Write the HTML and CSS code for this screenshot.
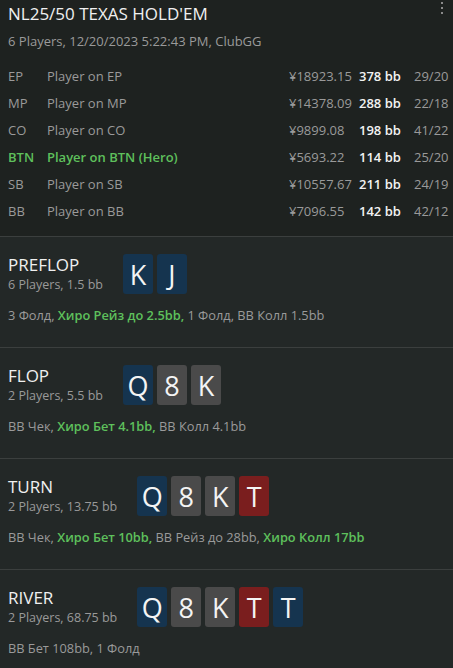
FILE: index.html
```html
<!DOCTYPE html>
<html lang="en">
<head>
  <meta charset="UTF-8">
  <meta name="viewport" content="width=device-width, initial-scale=1.0">
  <title>Hand</title>
  <link rel="stylesheet" href="styles.css">
</head>
<body>
  <div class="hand">
    <div class="hand-header">
      <button class="menu-btn" aria-label="Menu"><span></span><span></span><span></span></button>
      <h1 class="hand-title">NL25/50 TEXAS HOLD'EM</h1>
      <div class="hand-sub">6 Players, 12/20/2023 5:22:43 PM, ClubGG</div>
      <div class="players">
        <div class="player">
          <span class="pos">EP</span><span class="name">Player on EP</span><span class="money">¥18923.15</span><span class="bb">378 bb</span><span class="stats">29/20</span>
        </div>
        <div class="player">
          <span class="pos">MP</span><span class="name">Player on MP</span><span class="money">¥14378.09</span><span class="bb">288 bb</span><span class="stats">22/18</span>
        </div>
        <div class="player">
          <span class="pos">CO</span><span class="name">Player on CO</span><span class="money">¥9899.08</span><span class="bb">198 bb</span><span class="stats">41/22</span>
        </div>
        <div class="player hero">
          <span class="pos">BTN</span><span class="name">Player on BTN (Hero)</span><span class="money">¥5693.22</span><span class="bb">114 bb</span><span class="stats">25/20</span>
        </div>
        <div class="player">
          <span class="pos">SB</span><span class="name">Player on SB</span><span class="money">¥10557.67</span><span class="bb">211 bb</span><span class="stats">24/19</span>
        </div>
        <div class="player">
          <span class="pos">BB</span><span class="name">Player on BB</span><span class="money">¥7096.55</span><span class="bb">142 bb</span><span class="stats">42/12</span>
        </div>
      </div>
    </div>

    <div class="street">
      <div class="street-head">
        <div class="street-info">
          <div class="street-name">PREFLOP</div>
          <div class="street-sub">6 Players, 1.5 bb</div>
        </div>
        <div class="cards">
          <div class="card blue">K</div>
          <div class="card blue">J</div>
        </div>
      </div>
      <div class="actions">3 Фолд, <b>Хиро Рейз до 2.5bb,</b> 1 Фолд, BB Колл 1.5bb</div>
    </div>

    <div class="street">
      <div class="street-head">
        <div class="street-info">
          <div class="street-name">FLOP</div>
          <div class="street-sub">2 Players, 5.5 bb</div>
        </div>
        <div class="cards">
          <div class="card blue">Q</div>
          <div class="card grey">8</div>
          <div class="card grey">K</div>
        </div>
      </div>
      <div class="actions">BB Чек, <b>Хиро Бет 4.1bb,</b> BB Колл 4.1bb</div>
    </div>

    <div class="street">
      <div class="street-head">
        <div class="street-info">
          <div class="street-name">TURN</div>
          <div class="street-sub">2 Players, 13.75 bb</div>
        </div>
        <div class="cards">
          <div class="card blue">Q</div>
          <div class="card grey">8</div>
          <div class="card grey">K</div>
          <div class="card red">T</div>
        </div>
      </div>
      <div class="actions">BB Чек, <b>Хиро Бет 10bb,</b> BB Рейз до 28bb, <b>Хиро Колл 17bb</b></div>
    </div>

    <div class="street">
      <div class="street-head">
        <div class="street-info">
          <div class="street-name">RIVER</div>
          <div class="street-sub">2 Players, 68.75 bb</div>
        </div>
        <div class="cards">
          <div class="card blue">Q</div>
          <div class="card grey">8</div>
          <div class="card grey">K</div>
          <div class="card red">T</div>
          <div class="card blue">T</div>
        </div>
      </div>
      <div class="actions">BB Бет 108bb, 1 Фолд</div>
    </div>
  </div>
</body>
</html>
```

FILE: styles.css
```css
body {
  margin: 0;
  background-color: #232827;
  font-family: "Open Sans", "Noto Sans", sans-serif;
  color: #9a9a9a;
}
.hand-header {
  position: relative;
  background-color: #1e2220;
  padding: 2px 5px 12px 8px;
  border-bottom: 1px solid #3b3f3e;
}
.menu-btn {
  position: absolute;
  top: 2px;
  right: 10px;
  display: flex;
  flex-direction: column;
  gap: 3px;
  padding: 0;
  background: none;
  border: none;
}
.menu-btn span {
  width: 2px;
  height: 2px;
  background-color: #8a8a8a;
}
.hand-title {
  margin: 0;
  font-size: 17px;
  font-weight: 400;
  line-height: 24px;
  color: #f0f0f0;
}
.hand-sub {
  margin-top: 6px;
  margin-bottom: 12px;
  font-size: 13px;
  line-height: 18px;
}
.player {
  display: grid;
  grid-template-columns: 39px 1fr 70px 55px 34px;
  height: 27px;
  align-items: center;
  font-size: 13px;
  white-space: nowrap;
}
.player .bb {
  font-weight: 600;
  color: #f2f2f2;
}
.player.hero .pos,
.player.hero .name {
  font-weight: 600;
  color: #5ec05c;
}
.street {
  height: 93px;
  padding: 17px 8px 0;
  border-bottom: 1px solid #3b3f3e;
}
.street-head {
  display: flex;
  align-items: center;
  gap: 20px;
}
.street-name {
  font-size: 17px;
  line-height: 22px;
  color: #f0f0f0;
}
.street-sub {
  font-size: 12.5px;
  line-height: 18px;
}
.cards {
  display: flex;
  gap: 4px;
}
.card {
  width: 30px;
  height: 40px;
  border-radius: 3px;
  display: flex;
  align-items: center;
  justify-content: center;
  font-size: 27px;
  color: #f4f4f4;
}
.card.blue {
  background-color: #15344f;
}
.card.grey {
  background-color: #4a4a4a;
}
.card.red {
  background-color: #7a1e1e;
}
.actions {
  margin-top: 12px;
  font-size: 12.8px;
  line-height: 18px;
}
.actions b {
  font-weight: 600;
  color: #5ec05c;
}
```
